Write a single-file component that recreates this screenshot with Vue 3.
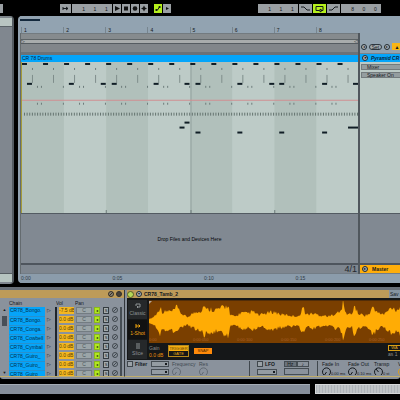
<script setup>
const bars = [1, 2, 3, 4, 5, 6, 7, 8]
const times = ['0:00', '0:05', '0:10', '0:15']
const beats = Array.from({ length: 16 }, (_, i) => i * 21.1)
const hats = Array.from({ length: 128 }, (_, i) => 2 + i * 2.63)
const kicks = [5, 47, 79, 90, 132, 163, 174, 216, 248, 258, 301, 332]
const toms = [[163, 60], [158, 65], [174, 70], [216, 70], [258, 70], [301, 70], [327, 65], [332, 65]]
const marks = bars.flatMap((b) => [15, 19, 41].map((o) => (b - 1) * 42.2 + o)).filter((x) => x < 336)
const chains = ['CR78_Bongo.', 'CR78_Bongo.', 'CR78_Conga.', 'CR78_Cowbell', 'CR78_Cymbal', 'CR78_Guiro_', 'CR78_Guiro_', 'CR78_Guiro_']
const volumes = ['-7.5 dB', '0.0 dB', '0.0 dB', '0.0 dB', '0.0 dB', '0.0 dB', '0.0 dB', '0.0 dB']

// Envelope of the sample: [position, amplitude] anchors with fine variation between them.
const anchors = [[0, 2], [4, 4], [8, 8], [11, 15], [14, 9], [19, 11], [23, 10], [28, 15], [31, 9], [38, 4], [42, 7], [46, 9], [49, 11], [53, 11], [55, 19], [57, 12], [62, 13], [66, 12], [70, 13], [78, 16], [79, 20], [81, 6], [87, 5], [92, 9], [98, 8], [104, 10], [110, 6], [116, 8], [124, 10], [132, 7], [140, 6], [150, 5], [154, 15], [157, 7], [164, 8], [172, 6], [181, 5], [187, 9], [191, 9], [194, 19], [197, 8], [203, 7], [205, 17], [209, 8], [216, 6], [221, 8], [224, 16], [228, 9], [235, 7], [240, 12], [243, 15], [247, 12], [251, 14]]
const amplitude = (x) => {
  const i = Math.max(1, anchors.findIndex((a) => a[0] >= x))
  const [x0, a0] = anchors[i - 1]
  const [x1, a1] = anchors[i]
  return a0 + ((a1 - a0) * (x - x0)) / (x1 - x0)
}
const noise = (n) => Math.abs((Math.sin(n * 12.9898) * 43758.5453) % 1)
const upper = []
const lower = []
for (let x = 0; x <= 251; x += 1) {
  const a = amplitude(x)
  upper.push(`${x},${(20 - a * (0.7 + noise(x) * 0.45)).toFixed(1)}`)
  lower.unshift(`${x},${(20 + a * (0.65 + noise(x + 400) * 0.45)).toFixed(1)}`)
}
const wave = [...upper, ...lower].join(' ')
</script>

<template>
  <div class="app">
    <header class="transport">
      <button class="chip stub" aria-label="Tap"></button>
      <button class="chip follow" aria-label="Follow"><svg viewBox="0 0 11 9"><path d="M3 4.500h5M6 3l2 1.500-2 1.500M3 3v3" /></svg></button>
      <div class="chip readout"><span>1</span><span>1</span><span>1</span></div>
      <button class="chip key" aria-label="Play"><svg viewBox="0 0 8 9"><path class="solid" d="M2 2l5 2.500-5 2.500z" /></svg></button>
      <button class="chip key" aria-label="Stop"><svg viewBox="0 0 8 9"><path class="solid" d="M2 2.500h4v4h-4z" /></svg></button>
      <button class="chip key" aria-label="Record"><svg viewBox="0 0 8 9"><circle class="solid" cx="4" cy="4.500" r="2.300" /></svg></button>
      <button class="chip key" aria-label="Overdub"><svg viewBox="0 0 8 9"><path class="solid" d="M4 1.500l1 2 2 1-2 1-1 2-1-2-2-1 2-1z" /></svg></button>
      <button class="chip key lit auto" aria-label="Automation arm"><svg viewBox="0 0 8 9"><path d="M1.500 6h2l2-3h1" /><circle class="solid" cx="2.500" cy="6" r="1" /><circle class="solid" cx="5.500" cy="3" r="1" /></svg></button>
      <button class="chip key" aria-label="Re-enable"><svg viewBox="0 0 8 9"><path class="solid" d="M3 3l3 1.500-3 1.500z" /></svg></button>
      <div class="chip readout loop-start"><span>1</span><span>1</span><span>1</span></div>
      <button class="chip wide" aria-label="Punch in"><svg viewBox="0 0 13 9"><path d="M2 3h3l3 3h3" /></svg></button>
      <button class="chip wide lit" aria-label="Loop"><svg viewBox="0 0 13 9"><path d="M6 6.500H3v-4h7v4H8M8 5v3l-2-1.500z" /></svg></button>
      <button class="chip wide" aria-label="Punch out"><svg viewBox="0 0 13 9"><path d="M2 6h3l3-3h3" /></svg></button>
      <div class="chip readout"><span>8</span><span>0</span><span>0</span></div>
    </header>

    <main class="workspace">
      <aside class="browser"><div class="search"></div><div class="files"></div><div class="preview"></div></aside>

      <section class="arrangement">
        <div class="ruler"><i class="overview"></i><div class="bars"><span v-for="b in bars" :key="b">{{ b }}</span></div></div>
        <div class="tracks">
          <div class="timeline">
            <div class="scrub"></div>
            <div class="brace"><i>▷</i><i>◁</i></div>
            <div class="locators"></div>
            <div class="clip-title">CR 78 Drums</div>
            <svg class="notes" viewBox="0 0 337 152" preserveAspectRatio="none">
              <rect v-for="n in 4" :key="'s' + n" class="shade" :x="(n - 1) * 84.400" y="0" width="42" height="152" />
              <rect class="bar-line" x="169" y="0" width="1" height="152" />
              <rect v-for="x in beats" :key="'t' + x" class="note" :x="x" y="1" width="5" height="2" />
              <g v-for="x in beats" :key="'b' + x"><rect class="dot" :x="x + 10" y="6" width="1" height="2" /><rect class="stem" :x="x + 10" y="13" width="1" height="8" /></g>
              <rect v-for="x in kicks" :key="'k' + x" class="note" :x="x" y="21" width="5" height="2" />
              <g v-for="x in marks" :key="'m' + x"><rect class="dot" :x="x" y="24" width="1" height="2" /><rect class="dot" :x="x" y="41" width="1" height="2" /></g>
              <rect class="automation" x="0" y="38" width="337" height="1" />
              <rect v-for="x in hats" :key="'h' + x" class="hat" :x="x" y="51" width="1" height="3" />
              <rect v-for="[x, y] in toms" :key="x + '-' + y" class="note" :x="x" :y="y" width="5" height="2" />
              <rect v-for="x in [84, 169, 253]" :key="'e' + x" class="dot" :x="x" y="149" width="1" height="3" />
            </svg>
            <div class="drop"><i v-for="b in bars" :key="b"></i><p>Drop Files and Devices Here</p></div>
            <div class="master-lane">4/1</div>
          </div>
          <div class="headers">
            <div class="set"><button class="round" aria-label="Previous locator">◂</button><button class="pill">Set</button><button class="round" aria-label="Next locator">▸</button><button class="amber" aria-label="Lock">▲</button></div>
            <div class="track-name"><button class="round" aria-label="Unfold">▾</button><span>Pyramid CR</span></div>
            <div class="track-body">
              <div class="field">Mixer</div>
              <div class="field">Speaker On</div>
            </div>
            <div class="blank"></div>
            <div class="master"><button class="round" aria-label="Unfold master">▸</button><span>Master</span></div>
          </div>
        </div>
        <div class="times"><span v-for="t in times" :key="t">{{ t }}</span></div>
      </section>
    </main>

    <section class="devices">
      <div class="rack">
        <header class="title"><i class="knob-icon slash"></i><i class="knob-icon full"></i></header>
        <div class="chain-area">
          <div class="scroll"><span>▲</span><i></i><span>▼</span></div>
          <table>
            <thead><tr><th class="name">Chain</th><th class="play"></th><th class="vol">Vol</th><th class="pan">Pan</th><th></th><th></th><th></th></tr></thead>
            <tbody>
              <tr v-for="(c, i) in chains" :key="i">
                <td class="name"><b>{{ c }}</b></td>
                <td class="play">▷</td>
                <td class="vol"><b>{{ volumes[i] }}</b></td>
                <td class="pan"><b>C</b></td>
                <td class="act"><button class="on" aria-label="Activate chain">◂</button></td>
                <td class="act"><button aria-label="Solo">S</button></td>
                <td class="swap"><button aria-label="Hot swap"><svg viewBox="0 0 4 4"><path d="M0 4L4 0" /></svg></button></td>
              </tr>
            </tbody>
          </table>
        </div>
      </div>

      <div class="sampler">
        <header class="title"><button class="power" aria-label="Device on"></button><button class="round" aria-label="Fold">▾</button><span>CR78_Tamb_2</span><button class="save">Sav</button></header>
        <div class="sample">
          <nav class="modes">
            <button><svg viewBox="0 0 8 6"><path d="M2 3V1h4v3H3M4 3L3 4l1 1" /></svg>Classic</button>
            <button class="active"><svg viewBox="0 0 8 6"><path d="M2 1v4M2 3h4M4.500 1.500L6 3 4.500 4.500" /></svg>1-Shot</button>
            <button><svg viewBox="0 0 8 6"><path d="M2 1h4M2 3h4M2 5h4" /></svg>Slice</button>
          </nav>
          <div class="display">
            <div class="wave">
              <svg viewBox="0 0 251 42" preserveAspectRatio="none"><polygon :points="wave" /><path d="M0 0h3l-3 3z" /></svg>
              <div class="wave-times"><span>0:00</span><span>0:00:050</span><span>0:00:100</span><span>0:00:150</span><span>0:00:200</span><span>0:00:250</span></div>
            </div>
            <div class="options">
              <div class="gain"><span>Gain</span><b>0.0 dB</b></div>
              <div class="trigger"><button class="hot">TRIGGER</button><button>GATE</button></div>
              <button class="snap">SNAP</button>
              <div class="warp"><button>WA</button><span>as 1</span></div>
            </div>
          </div>
        </div>
        <div class="controls">
          <label class="check filter"><input type="checkbox" />Filter</label>
          <div class="selects"><select aria-label="Filter type"><option></option></select><select aria-label="Filter circuit"><option></option></select></div>
          <div class="dial freq dim"><span>Frequency</span><div><svg viewBox="0 0 9 9"><path d="M2 8A4 4 0 1 1 7 8M4.500 5L2.500 8" /></svg></div></div>
          <div class="dial res dim"><span>Res</span><div><svg viewBox="0 0 9 9"><path d="M2 8A4 4 0 1 1 7 8M4.500 5L2.500 8" /></svg></div></div>
          <div class="lfo"><label class="check"><input type="checkbox" />LFO</label><select aria-label="LFO shape"><option></option></select></div>
          <div class="rate"><div><button class="sel">Hz</button><button>♪</button></div><input aria-label="LFO rate" /></div>
          <div class="dial fade first"><span>Fade In</span><div><svg viewBox="0 0 9 9"><path d="M2 8A4 4 0 1 1 7 8M4.500 5L2.500 8" /></svg><em>0.00 ms</em></div></div>
          <div class="dial fade"><span>Fade Out</span><div><svg viewBox="0 0 9 9"><path d="M2 8A4 4 0 1 1 7 8M4.500 5L2.500 8" /></svg><em>0.10 ms</em></div></div>
          <div class="dial transp"><span>Transp</span><div><svg viewBox="0 0 9 9"><path d="M2 8A4 4 0 1 1 7 8M4.500 5L2 2" /></svg><em>0 st</em></div></div>
          <div class="dial vel"><span>V</span><div><svg viewBox="0 0 9 9"><path d="M2 8A4 4 0 1 1 7 8M4.500 5L7 8" /></svg></div></div>
        </div>
      </div>
    </section>

    <footer class="status"><div class="message"></div><div class="clip-view"></div></footer>
  </div>
</template>

<style>
html, body { margin: 0; background: #000; }
</style>

<style scoped>
* { box-sizing: border-box; }
.app { min-height: 100vh; display: flex; flex-direction: column; background: #000; color: #15191d; font: 5px/6px "Liberation Sans", Arial, sans-serif; overflow: hidden; }
button, input, select { margin: 0; padding: 0; border: 0; border-radius: 0; font: inherit; color: inherit; background: none; appearance: none; min-width: 0; }
i, em { font-style: normal; }
p { margin: 0; }
svg { display: block; fill: none; stroke: #14181c; stroke-width: 1; }
.solid { fill: #111; stroke: none; }

.transport { display: flex; gap: 1px; height: 16px; padding-top: 4px; }
.chip { height: 9px; flex: none; background: #9a9fa3; }
.chip svg { width: 100%; height: 9px; }
.stub { width: 3px; margin-right: 56px; }
.follow { width: 11px; }
.readout { width: 40px; display: flex; justify-content: space-around; align-items: center; padding-left: 6px; }
.key { width: 8px; }
.chip.lit { background: #b5ef1c; }
.auto { margin-left: 5px; }
.loop-start { margin-left: 86px; }
.wide { width: 13px; }

.workspace { flex: 1; display: flex; gap: 4px; }
.browser { width: 14px; flex: none; margin-bottom: 3px; display: flex; flex-direction: column; border-right: 2px solid #555c62; border-top: 2px solid #7d858b; border-radius: 0 4px 4px 0; background: #80878f; }
.search { height: 9px; background: #b9c5c2; border-bottom: 1px solid #5a6267; }
.files { flex: 1; }
.preview { height: 9px; margin-bottom: 2px; background: #b6c4c0; border-top: 1px solid #555c62; }

.arrangement { flex: 1; display: flex; flex-direction: column; min-width: 0; margin-bottom: 4px; padding-left: 2px; background: #92a2b0; border-radius: 4px 0 0 4px; overflow: hidden; }
.ruler { height: 17px; display: flex; flex-direction: column; justify-content: space-between; background: #92a3b1; }
.overview { width: 20px; height: 2px; margin-top: 3px; background: #14293d; }
.bars { display: grid; grid-template-columns: repeat(8, 1fr); margin: 0 42px 0 1px; }
.bars span { padding-left: 2px; border-left: 1px solid #77858f; height: 6px; }
.tracks { flex: 1; display: flex; }
.timeline { flex: 1; display: flex; flex-direction: column; min-width: 0; border-left: 1px solid #646b6f; border-right: 2px solid #50575d; }
.scrub { height: 7px; background: #868b8e; border-top: 1px solid #737b80; border-bottom: 1px solid #5d6467; }
.brace { height: 3px; display: flex; justify-content: space-between; background: #a8acac; line-height: 3px; }
.locators { height: 12px; background: #81868a; border-top: 1px solid #555c61; border-bottom: 3px solid #6b7278; }
.clip-title { height: 7px; background: #04a5fa; line-height: 7px; padding-left: 1px; color: #06243a; overflow: hidden; }
.notes { width: 100%; height: 151px; background: #bdcbc7; stroke: none; border-left: 1px solid #a39a38; }
.shade { fill: #b1c0bb; }
.bar-line { fill: #91a09d; }
.note { fill: #101d25; }
.dot { fill: #6c7b7a; }
.stem { fill: #7f8d8b; }
.hat { fill: #64736f; }
.automation { fill: #d18f92; }
.drop { flex: 1; display: grid; grid-template-columns: repeat(8, 1fr); grid-template-rows: 1fr; border-top: 1px solid #535b62; border-bottom: 2px solid #4e555d; background: #818992; }
.drop i { grid-row: 1; background: #838b95; }
.drop i:nth-child(odd) { background: #7b838c; }
.drop p { grid-row: 1; grid-column: 1 / -1; align-self: center; text-align: center; color: #050709; }
.master-lane { height: 9px; background: #7e868f; text-align: right; font-size: 9px; line-height: 9px; color: #23282e; padding-right: 1px; border-bottom: 1px solid #737d86; }
.headers { width: 40px; flex: none; display: flex; flex-direction: column; background: #8fa0ae; overflow: hidden; white-space: nowrap; }
.set { height: 21px; display: flex; align-items: center; gap: 2px; padding: 7px 0 0 1px; background: #92a3b0; border-bottom: 1px solid #79838a; }
.round { width: 6px; height: 6px; flex: none; border: 1px solid #202a30; border-radius: 3px; background: #a9b1b5; line-height: 4px; font-size: 4px; overflow: hidden; }
.pill { width: 13px; height: 6px; flex: none; border: 1px solid #2d373f; border-radius: 3px; background: #a4acb0; line-height: 4px; }
.amber { width: 10px; height: 7px; flex: none; background: #f9b514; }
.track-name { height: 8px; display: flex; align-items: center; gap: 3px; padding-left: 2px; background: #04a5fa; font-style: italic; font-weight: bold; color: #06243a; }
.track-body { height: 151px; padding: 2px 0 0 1px; display: flex; flex-direction: column; gap: 2px; background: #bccac6; }
.field { height: 6px; padding-left: 5px; background: #949d9f; border: 1px solid #737b7d; border-right: 0; line-height: 5px; }
.blank { flex: 1; background: #818992; border-top: 1px solid #535b62; border-bottom: 2px solid #4e555d; }
.master { height: 9px; display: flex; align-items: center; gap: 4px; padding-left: 2px; background: #ffae0b; font-weight: bold; border-bottom: 1px solid #737d86; }
.times { height: 9px; display: grid; grid-template-columns: repeat(4, 27%); margin-right: 40px; padding-left: 1px; background: #8b9cab; line-height: 9px; color: #303b45; }

.devices { display: flex; height: 92px; flex: none; background: #878f99; border-top: 3px solid #697078; border-bottom: 2px solid #878f99; border-radius: 0 0 3px 3px; }
.title { height: 8px; display: flex; align-items: center; background: #bd9b59; }
.rack { width: 125px; flex: none; border-right: 1px solid #33383d; border-bottom: 1px solid #c0ad6c; background: #8a929c; }
.rack .title { justify-content: flex-end; gap: 2px; padding-right: 2px; }
.knob-icon { width: 6px; height: 6px; border-radius: 3px; border: 1px solid #33302a; background: #8c8270; }
.slash { background: linear-gradient(135deg, #8c8270 40%, #33302a 40% 60%, #8c8270 60%); }
.full { background: #45403a; }
.chain-area { display: flex; gap: 2px; height: 78px; padding-left: 2px; overflow: hidden; }
.scroll { width: 5px; margin-top: 9px; display: flex; flex-direction: column; justify-content: space-between; text-align: center; font-size: 4px; }
.scroll i { height: 10px; background: #484f57; margin-bottom: 42px; }
table { border-collapse: collapse; table-layout: fixed; width: 113px; height: 0; }
tr { height: 9px; }
td, th { padding: 0 1px 0 0; height: 9px; line-height: 6px; font-weight: normal; text-align: left; overflow: hidden; white-space: nowrap; vertical-align: top; }
th { padding-top: 2px; }
td b { display: block; height: 7px; font-weight: normal; overflow: hidden; }
th.name { width: 36px; }
th.play { width: 11px; }
th.vol { width: 19px; }
th.pan { width: 19px; }
td.name { padding: 0; background: #06a4f8; border-bottom: 1px solid #2891ce; }
td.name b { padding-left: 1px; color: #05324e; }
td.play { padding-left: 2px; border-right: 2px solid #1e242b; }
td.vol { padding: 0 1px 0 2px; }
td.vol b { background: #f4b720; color: #583f05; }
td.pan b { margin: 0 1px; background: #9ba5a8; border: 1px solid #737c82; line-height: 5px; text-align: center; color: #4c565c; }
.act button { display: block; width: 6px; height: 7px; border: 1px solid #343b40; background: #a3abad; text-align: center; font-size: 4px; line-height: 5px; }
.act .on { background: #b1e81e; border-color: #8ab81d; }
.swap { border-right: 2px solid #454d54; }
.swap button { display: block; width: 6px; height: 6px; border: 1px solid #434b51; border-radius: 3px; }
.swap svg { width: 4px; height: 4px; stroke: #434b51; }

.sampler { flex: 1; min-width: 0; display: flex; flex-direction: column; padding-left: 2px; border-bottom: 1px solid #c0ad6c; }
.sampler .title { gap: 2px; }
.power { width: 7px; height: 7px; border-radius: 4px; border: 1px solid #565e26; background: #b5d756; }
.title span { font-weight: bold; }
.save { width: 11px; height: 8px; margin-left: auto; background: #8794a1; text-align: left; padding-left: 1px; }
.sample { height: 62px; display: flex; background: #151718; padding-top: 1px; }
.modes { width: 22px; flex: none; display: flex; flex-direction: column; gap: 1px; padding: 1px 2px 1px 1px; }
.modes button { flex: 1; display: flex; flex-direction: column; align-items: center; justify-content: center; gap: 1px; background: #25282a; color: #8e9395; }
.modes svg { width: 8px; height: 6px; stroke: #8e9395; }
.modes .active { background: #111; color: #f2a711; }
.modes .active svg { stroke: #f2a711; }
.display { flex: 1; min-width: 0; }
.wave { height: 43px; display: grid; margin-top: 1px; background: #7a3f00; border-top: 1px solid #522d08; }
.wave svg { grid-area: 1 / 1; width: 100%; height: 42px; fill: #ffac05; stroke: none; }
.wave svg path { fill: #b7a89a; }
.wave-times { grid-area: 1 / 1; align-self: end; display: grid; grid-template-columns: repeat(6, 44px); color: #a9622a; font-size: 4px; overflow: hidden; }
.options { display: flex; align-items: flex-start; padding-top: 2px; color: #8c8c8b; }
.gain { width: 19px; display: flex; flex-direction: column; gap: 1px; }
.gain b { color: #e98c0a; font-weight: normal; }
.trigger { width: 21px; border: 1px solid #b6891c; display: flex; flex-direction: column; }
.trigger button { height: 5px; font-size: 4px; line-height: 5px; color: #e2a714; }
.trigger .hot { background: #f5ae10; color: #5b3a04; }
.snap { width: 18px; height: 6px; margin: 3px 0 0 5px; background: #ff8a0a; color: #4b2603; font-size: 4px; }
.warp { width: 12px; margin-left: auto; display: flex; flex-direction: column; white-space: nowrap; }
.warp button { height: 6px; border: 1px solid #d99e14; border-right: 0; color: #eab01e; font-size: 4px; line-height: 4px; }
.controls { flex: 1; display: flex; padding-top: 1px; background: #8a929c; white-space: nowrap; overflow: hidden; }
.check { display: flex; gap: 2px; height: 6px; align-items: center; font-weight: bold; }
.check input { width: 6px; height: 6px; flex: none; border: 1px solid #40474d; background: #9ba2a8; }
.filter { width: 24px; flex: none; }
.selects, .lfo, .rate { flex: none; }
.selects { width: 18px; display: flex; flex-direction: column; gap: 2px; }
select { height: 6px; border: 1px solid #454d54; background: #949ca3 linear-gradient(#171b20, #171b20) right 1px center / 2px 2px no-repeat; }
.dial { flex: none; }
.dial span { display: block; }
.dial div { display: flex; align-items: flex-end; }
.dial svg { width: 9px; height: 9px; flex: none; }
.dim { color: #414951; }
.dim svg { stroke: #626a73; }
.freq { width: 27px; margin-left: 3px; }
.res { width: 51px; border-right: 1px solid #40474d; }
.lfo { width: 20px; margin-left: 7px; display: flex; flex-direction: column; gap: 2px; }
.rate { width: 25px; margin-left: 7px; display: flex; flex-direction: column; gap: 1px; }
.rate div { display: flex; }
.rate button { flex: 1; height: 6px; border: 1px solid #454d54; line-height: 4px; }
.rate .sel { background: #6b737b; }
.rate input { width: 100%; height: 7px; border: 1px solid #454d54; }
.fade { width: 26px; }
.first { width: 31px; margin-left: 8px; padding-left: 4px; border-left: 1px solid #40474d; }
.fade em, .transp em { font-size: 4px; line-height: 5px; }
.transp { width: 24px; }
.vel { width: 4px; }
.vel svg { stroke: #e0a018; }

.status { height: 21px; flex: none; display: flex; gap: 5px; padding: 5px 0 6px; }
.message { flex: 78; background: #858e9a; border-top: 1px solid #a3abb4; }
.clip-view { flex: 21; background: repeating-linear-gradient(90deg, #aeb3b8 0 1px, #bfc3c6 1px 3px); border: 1px solid #d6d8da; border-right: 0; }
</style>
